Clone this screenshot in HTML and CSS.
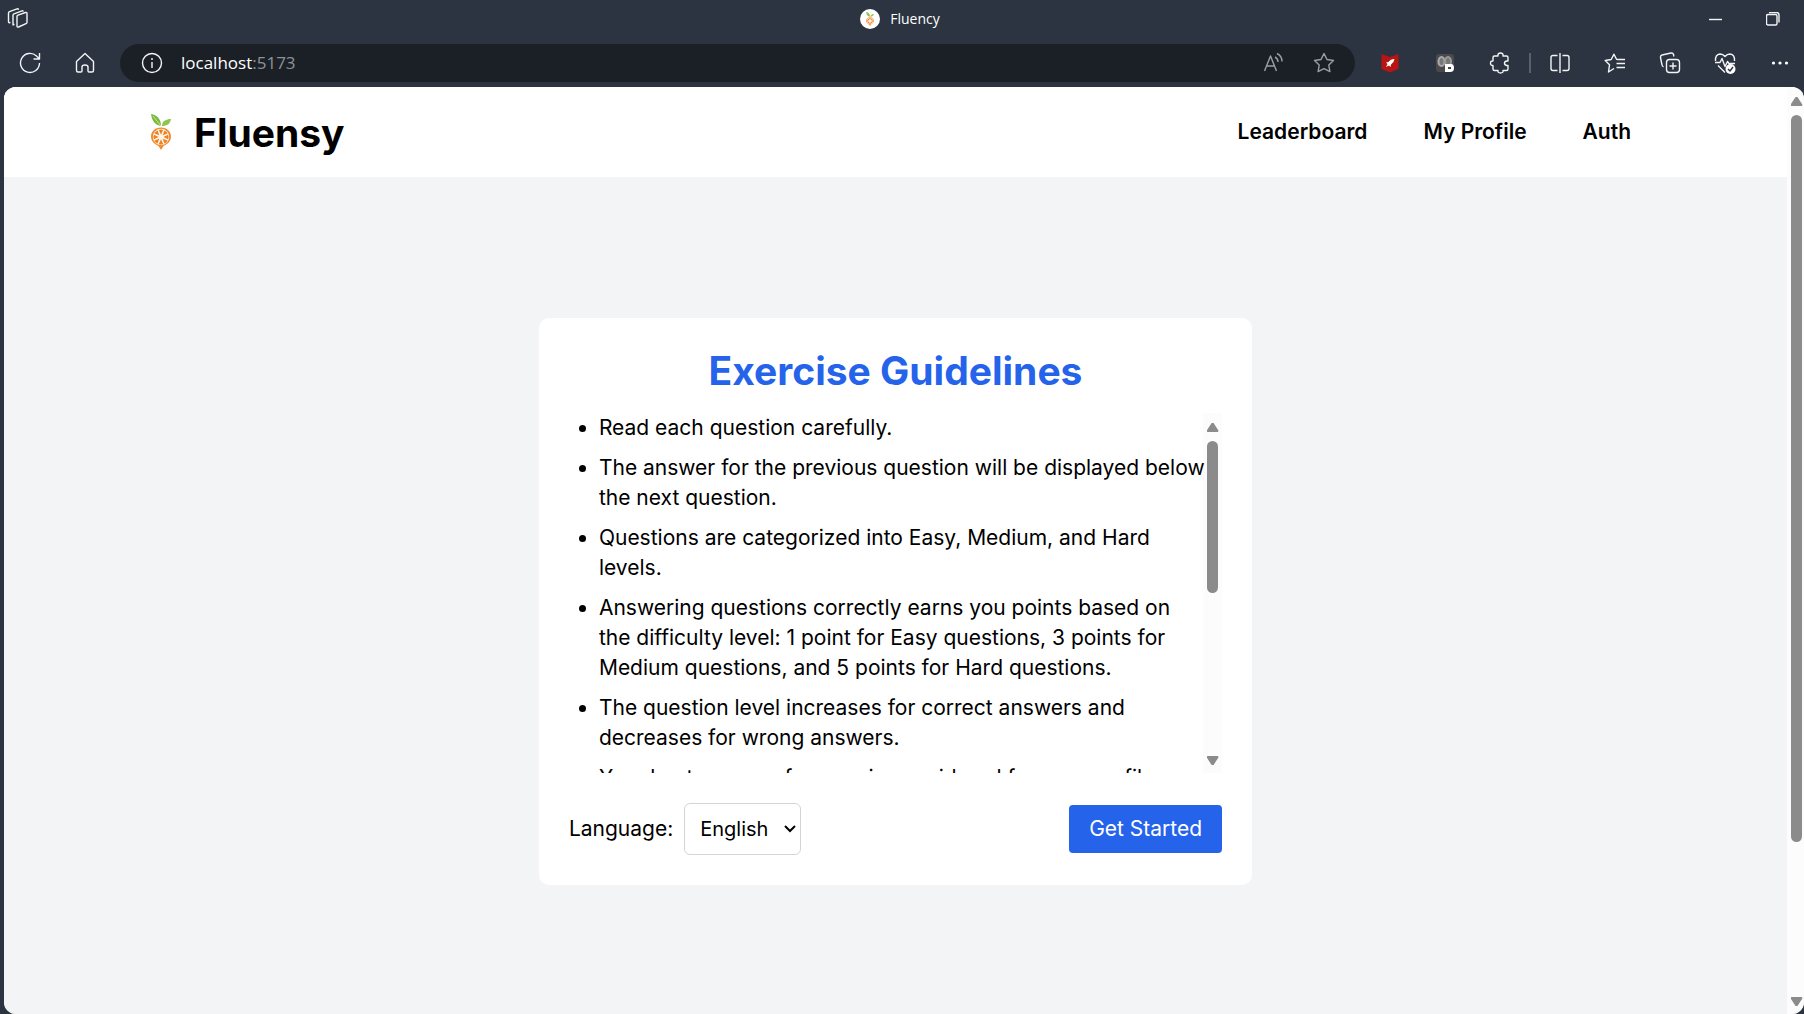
FILE: index.html
```html
<!DOCTYPE html>
<html lang="en">
<head>
<meta charset="utf-8">
<meta name="viewport" content="width=device-width, initial-scale=1">
<title>Fluency</title>
<link rel="stylesheet" href="styles.css">
</head>
<body>
<svg class="symbols" aria-hidden="true">
  <symbol id="fruit" viewBox="0 0 20 36">
    <path d="M10 12C4 11 1 7 0 0c6 1 10 5 10 12z" fill="#7cb83a"/>
    <path d="M11 12c0-5 4-7 9-7-1 5-4 7-9 7z" fill="#8cc64a"/>
    <path d="M2 2l8 10" stroke="#c8e6a0" fill="none"/>
    <path d="M10 13.500c6 0 10 4 10 9 0 6-5 8-7.500 9.500l-2.500 4-2.500-4C5 30.500 0 28.500 0 22.500c0-5 4-9 10-9z" fill="#f08a30"/>
    <circle cx="10" cy="23" r="8.200" fill="#fff4e6"/>
    <g fill="#f07f20">
      <path id="seg" d="M10 20.500l-2.200-4.500q2.200-1.200 4.400 0z"/>
      <use href="#seg" transform="rotate(45 10 23)"/>
      <use href="#seg" transform="rotate(90 10 23)"/>
      <use href="#seg" transform="rotate(135 10 23)"/>
      <use href="#seg" transform="rotate(180 10 23)"/>
      <use href="#seg" transform="rotate(225 10 23)"/>
      <use href="#seg" transform="rotate(270 10 23)"/>
      <use href="#seg" transform="rotate(315 10 23)"/>
    </g>
  </symbol>
</svg>

<div class="browser">
  <div class="titlebar">
    <button class="icon-btn" aria-label="Workspaces">
      <svg width="22" height="22" viewBox="0 0 22 22"><path d="M10 8.500q0-1 1-1.400l7.500-2.600q1.500-.4 1.500 1v8.700q0 1-1 1.400l-7.500 3.400q-1.500.5-1.500-1zM7.500 16.500l-1.500.3V7.200q0-1 1-1.400L15 2.800q1-.3 1.300.8M3.500 14.500l-1.200.2q-.8 0-.8-1V5q0-1 1-1.400L10 .9q1.200-.4 1.600.8"/></svg>
    </button>
    <div class="tab">
      <span class="tab-icon"><svg width="8" height="14"><use href="#fruit"/></svg></span>
      <span>Fluency</span>
    </div>
    <div class="window-controls">
      <button class="icon-btn" aria-label="Minimize"><svg width="14" height="14" viewBox="0 0 14 14"><path d="M0 7.500h13"/></svg></button>
      <button class="icon-btn" aria-label="Restore"><svg width="14" height="14" viewBox="0 0 14 14"><rect x=".5" y="2.500" width="10.500" height="10.500" rx="1.500"/><path d="M3 .5h7.500q2.500 0 2.500 2.500v7.500"/></svg></button>
    </div>
  </div>

  <div class="toolbar">
    <button class="icon-btn" aria-label="Refresh"><svg width="22" height="22" viewBox="0 0 22 22"><path d="M20.500 11a9.500 9.500 0 1 1-3-7l2.500 2.500M20.500 1v6h-6"/></svg></button>
    <button class="icon-btn home" aria-label="Home"><svg width="22" height="22" viewBox="0 0 22 22"><path d="M2.500 9.500L11 1.500l8.500 8v9q0 1.500-1.500 1.500h-3q-1 0-1-1v-4q0-2-3-2t-3 2v4q0 1-1 1H4q-1.500 0-1.500-1.500z"/></svg></button>
    <div class="address">
      <button class="icon-btn" aria-label="Site information"><svg width="22" height="22" viewBox="0 0 22 22"><circle cx="11" cy="11" r="9.500"/><path d="M11 10v6M11 6v2"/></svg></button>
      <span class="url">localhost<span class="port">:5173</span></span>
      <button class="icon-btn dim" aria-label="Read aloud"><svg width="22" height="22" viewBox="0 0 22 22"><path d="M1.500 19L7.500 4l6 15M3.500 14h8M12 5q3 1.500 3 5M14 1.500q5 2.500 5 8"/></svg></button>
      <button class="icon-btn dim" aria-label="Add to favorites"><svg width="22" height="22" viewBox="0 0 22 22"><path d="M11 1.500l3 6 6.500 1-4.700 4.600 1.100 6.500-5.900-3-5.900 3 1.100-6.500L1.500 8.500l6.500-1z"/></svg></button>
    </div>
    <div class="tools">
      <button class="icon-btn" aria-label="Safe browsing"><svg width="22" height="22" viewBox="0 0 22 22"><path d="M2.500 2l8.500 3 8.500-3v15L11 20.500 2.500 17z" fill="#b81414" stroke="none"/><path d="M15.500 7q-4 0-6 3l-2.500.5 1.500 1.500-1.500 3 3-1.500 1.500 1.500.5-2.500q3-2 3.500-5.500z" fill="#fff" stroke="none"/></svg></button>
      <button class="icon-btn" aria-label="Page monitor"><svg width="22" height="22" viewBox="0 0 22 22"><rect x="2" y="2" width="18" height="18" rx="3" fill="#4a4a4a" stroke="none"/><ellipse cx="7.500" cy="9.500" rx="3" ry="4.500" fill="#777" stroke="#aaa" stroke-width="2"/><ellipse cx="14" cy="9.500" rx="3" ry="4.500" fill="#777" stroke="#999" stroke-width="2"/><path d="M11 12h6q3 0 3 4t-4 4h-5z" fill="#fff" stroke="none"/><path d="M14 15h3v2h-3z" fill="#444" stroke="none"/></svg></button>
      <button class="icon-btn" aria-label="Extensions"><svg width="22" height="22" viewBox="0 0 22 22"><path d="M5.500 4H9q-.5-3 2.500-3T14 4h3.500q1.500 0 1.500 1.500V9h-1q-2.500.2-2.500 2.200t2.500 2.300h1V17q0 1.500-1.500 1.500H14q.5 2.500-2.500 2.500T9 18.500H5.500Q4 18.500 4 17v-3.500q-2.500.2-2.500-2.300T4 9V5.500Q4 4 5.500 4z"/></svg></button>
      <span class="divider"></span>
      <button class="icon-btn" aria-label="Split screen"><svg width="22" height="22" viewBox="0 0 22 22"><path d="M8.500 3.500H4q-2 0-2 2v11q0 2 2 2h4.500M13.500 3.500H18q2 0 2 2v11q0 2-2 2h-4.500M11 1v20"/></svg></button>
      <button class="icon-btn" aria-label="Favorites"><svg width="22" height="22" viewBox="0 0 22 22"><path d="M14 7.500l-1.500-.3-2.500-5-2.800 5.300-6 1 4.300 4.300L4.500 20l5.500-3.500M14 7.500h7M12.500 11.500H21M12.500 15.500H21"/></svg></button>
      <button class="icon-btn" aria-label="Collections"><svg width="22" height="22" viewBox="0 0 22 22"><rect x="7.500" y="7.500" width="13" height="13" rx="3"/><path d="M14 10.500v7M10.500 14h7M4.500 15q-1.300-.7-1.600-2.500L1.500 5.500q-.3-2 1.500-2.500L12 1q2-.3 2.500 1.500l.4 2"/></svg></button>
      <button class="icon-btn" aria-label="Browser essentials"><svg width="22" height="22" viewBox="0 0 22 22"><path d="M1.500 9Q1 2.500 6 2q3 0 5 2.500Q13 2 16 2q5 .5 4.500 7M1 10.500h5l2-4 3 8 2.500-5 1.500 2h6M4 13.500l7 7"/><circle cx="16.500" cy="17" r="5" fill="#fff" stroke="none"/><path d="M14 17l2 2 3-4" stroke="#2b3440"/></svg></button>
      <button class="icon-btn" aria-label="Settings and more"><svg width="22" height="22" viewBox="0 0 22 22"><g fill="#fff" stroke="none"><circle cx="4.500" cy="11" r="1.600"/><circle cx="11" cy="11" r="1.600"/><circle cx="17.500" cy="11" r="1.600"/></g></svg></button>
    </div>
  </div>

  <div class="viewport">
    <div class="page">
      <header class="header">
        <a class="brand" href="#"><svg width="22" height="36"><use href="#fruit"/></svg><span>Fluensy</span></a>
        <nav class="nav">
          <a href="#">Leaderboard</a>
          <a href="#">My Profile</a>
          <a href="#">Auth</a>
        </nav>
      </header>
      <main class="main">
        <section class="card">
          <h1>Exercise Guidelines</h1>
          <div class="scroller">
            <ul class="rules">
              <li>Read each question carefully.</li>
              <li>The answer for the previous question will be displayed below the next question.</li>
              <li>Questions are categorized into Easy, Medium, and Hard levels.</li>
              <li>Answering questions correctly earns you points based on the difficulty level: 1 point for Easy questions, 3 points for Medium questions, and 5 points for Hard questions.</li>
              <li>The question level increases for correct answers and decreases for wrong answers.</li>
              <li>Your best scores of exams is considered for your profile.</li>
            </ul>
            <div class="scrollbar" aria-hidden="true"><i class="up"></i><b></b><i class="down"></i></div>
          </div>
          <div class="actions">
            <label for="language">Language:</label>
            <span class="select">
              <select id="language"><option>English</option></select>
              <svg width="12" height="8" viewBox="0 0 12 8"><path d="M1 1l5 5 5-5"/></svg>
            </span>
            <button class="start">Get Started</button>
          </div>
        </section>
      </main>
    </div>
    <div class="scrollbar page-bar" aria-hidden="true"><i class="up"></i><b></b><i class="down"></i></div>
  </div>
</div>
</body>
</html>
```
FILE: styles.css
```css
* { box-sizing: border-box; }

body {
  margin: 0;
  background: #2b3440;
  color: #000;
  font-family: Inter, sans-serif;
  font-size: 21px;
  line-height: 30px;
}

a { color: inherit; text-decoration: none; }
button, select { font: inherit; color: inherit; }
.symbols { position: absolute; width: 0; height: 0; }

.browser {
  display: flex;
  flex-direction: column;
  height: 100vh;
  overflow: hidden;
}

/* Browser chrome */
.titlebar, .toolbar {
  display: flex;
  flex: none;
  align-items: center;
  color: #fff;
  font-family: "Open Sans", sans-serif;
}

.titlebar {
  display: grid;
  grid-template-columns: 1fr auto 1fr;
  height: 38px;
  padding: 0 24px 0 7px;
  font-size: 14px;
  line-height: 20px;
}

.tab { display: flex; align-items: center; gap: 10px; padding-left: 13px; }

.tab-icon {
  display: flex;
  align-items: center;
  justify-content: center;
  width: 20px;
  height: 20px;
  border-radius: 50%;
  background: #fff;
}

.window-controls { display: flex; gap: 43px; justify-content: flex-end; }

.icon-btn {
  display: flex;
  flex: none;
  padding: 0;
  border: 0;
  background: none;
}

.icon-btn svg { fill: none; stroke: #f2f4f6; stroke-width: 1.4; stroke-linejoin: round; }
.dim svg { stroke: #9a9ea3; }

.toolbar { height: 49px; padding: 0 13px 0 19px; }
.home { margin-left: 33px; }

.address {
  display: flex;
  flex: 1;
  align-items: center;
  gap: 28px;
  height: 38px;
  margin-left: 24px;
  padding: 0 20px 0 21px;
  border-radius: 19px;
  background: #1b2027;
}

.url { flex: 1; margin-left: -10px; font-size: 17px; line-height: 24px; }
.port { color: #8e9297; }

.tools { display: flex; align-items: center; gap: 33px; margin-left: 24px; }
.divider { width: 2px; height: 20px; margin: 0 -15px; background: #59616b; }

/* Web page */
.viewport {
  display: flex;
  flex: 1;
  min-height: 0;
  margin-left: 4px;
  overflow: hidden;
  border-radius: 12px;
  background: #fcfcfc;
}

.page {
  display: flex;
  flex: 1;
  flex-direction: column;
  background: #f3f4f6;
}

.header {
  display: flex;
  align-items: center;
  justify-content: space-between;
  height: 90px;
  padding: 0 156px 0 146px;
  background: #fff;
}

.brand {
  display: flex;
  align-items: center;
  gap: 22px;
  font-size: 39px;
  font-weight: 700;
  line-height: 45px;
}

.nav { display: flex; gap: 56px; font-weight: 600; }

.main {
  display: flex;
  flex: 1;
  align-items: center;
  justify-content: center;
  padding-top: 12px;
}

.card {
  width: 40%;
  min-width: 713px;
  padding: 30px;
  border-radius: 10px;
  background: #fff;
}

h1 {
  margin: 0 0 20px;
  color: #2563eb;
  font-size: 39px;
  font-weight: 700;
  line-height: 45px;
  text-align: center;
}

.scroller { position: relative; z-index: 0; height: 360px; overflow: hidden; }

.rules {
  display: flex;
  flex-direction: column;
  gap: 10px;
  margin: 0;
  padding: 0 16px 0 30px;
}

/* Scrollbars */
.scrollbar {
  display: flex;
  flex-direction: column;
  align-items: center;
  width: 19px;
  padding: 10px 0 8px;
  background: #fcfcfc;
}

.scroller .scrollbar { position: absolute; top: 0; right: 0; bottom: 0; z-index: -1; }

.scrollbar i { width: 12px; height: 9px; background: #8b8b8b; }
.up { clip-path: polygon(42% 0, 58% 0, 100% 85%, 94% 100%, 6% 100%, 0 85%); }
.down { clip-path: polygon(6% 0, 94% 0, 100% 15%, 58% 100%, 42% 100%, 0 15%); }

.scrollbar b {
  width: 11px;
  height: 152px;
  margin: 9px 0 auto;
  border-radius: 6px;
  background: #8b8b8b;
}

.page-bar { width: 17px; padding-left: 2px; }
.page-bar b { height: 80%; }

/* Card footer */
.actions { display: flex; align-items: center; margin-top: 30px; }

.select { display: flex; align-items: center; margin-left: 11px; }

.select select {
  width: 117px;
  height: 52px;
  padding: 0 15px;
  border: 1px solid #d1d5db;
  border-radius: 6px;
  background: #fff;
  appearance: none;
  font-size: 20px;
}

.select svg {
  margin-left: -17px;
  fill: none;
  stroke: #000;
  stroke-width: 2;
  pointer-events: none;
}

.start {
  height: 48px;
  margin-left: auto;
  padding: 0 20px;
  border: 0;
  border-radius: 4px;
  background: #2563eb;
  color: #fff;
}
```
